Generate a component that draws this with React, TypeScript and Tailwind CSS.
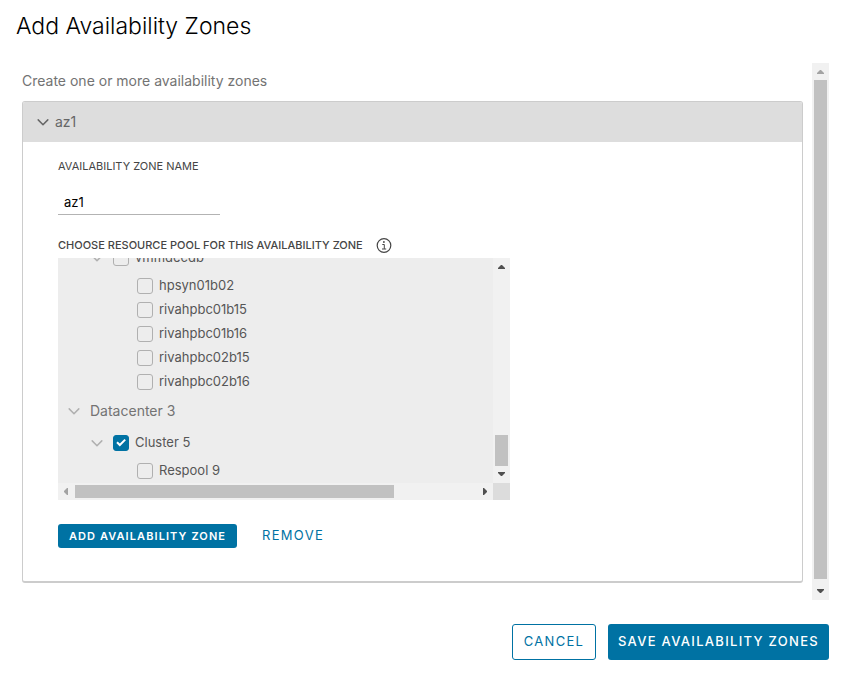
import { useId, useState } from "react";

type ArrowDirection = "up" | "down" | "left" | "right";

const arrowPoints: Record<ArrowDirection, string> = {
  up: "5,11 12,11 12,10 9,7 8,7 5,10",
  down: "5,6 12,6 12,7 9,10 8,10 5,7",
  left: "10,5 10,12 9,12 6,9 6,8 9,5",
  right: "7,5 7,12 8,12 11,9 11,8 8,5",
};

function ScrollArrow({ direction, muted }: { direction: ArrowDirection; muted?: boolean }) {
  return (
    <button
      type="button"
      aria-label={`Scroll ${direction}`}
      className={`size-[17px] shrink-0 ${muted ? "text-[#a3a3a3]" : "text-[#505050]"}`}
    >
      <svg viewBox="0 0 17 17" className="size-[17px]" fill="currentColor">
        <polygon points={arrowPoints[direction]} />
      </svg>
    </button>
  );
}

function Chevron({ className }: { className: string }) {
  return (
    <svg
      viewBox="0 0 12 12"
      className={`size-3 shrink-0 stroke-[1.5] ${className}`}
      fill="none"
      stroke="currentColor"
      strokeLinecap="round"
      strokeLinejoin="round"
    >
      <path d="M1.2 3.9 6 8.7l4.8-4.8" />
    </svg>
  );
}

function TreeCheckbox({ label, defaultChecked }: { label: string; defaultChecked?: boolean }) {
  const id = useId();
  const [checked, setChecked] = useState(Boolean(defaultChecked));
  return (
    <div className="flex items-center gap-1.5">
      <span className="grid size-4 shrink-0">
        <input
          id={id}
          type="checkbox"
          checked={checked}
          onChange={(event) => setChecked(event.target.checked)}
          className="col-start-1 row-start-1 size-4 appearance-none rounded-[3px] border border-[#b0b0b0] checked:border-[#0072a3] checked:bg-[#0072a3]"
        />
        {checked && (
          <svg
            viewBox="0 0 16 16"
            className="pointer-events-none col-start-1 row-start-1 size-4"
            fill="none"
            stroke="white"
            strokeWidth="2"
          >
            <path d="M4 7.3 6.8 10 12.2 4.6" />
          </svg>
        )}
      </span>
      <label htmlFor={id} className="pb-0.5 text-[13px] leading-5 whitespace-nowrap text-[#565656]">
        {label}
      </label>
    </div>
  );
}

function ClusterRow({ label, defaultChecked }: { label: string; defaultChecked?: boolean }) {
  return (
    <div className="flex h-8 shrink-0 items-center gap-2.5 pl-[33px]">
      <button type="button" aria-label={`Collapse ${label}`}>
        <Chevron className="text-[#b0b0b0]" />
      </button>
      <TreeCheckbox label={label} defaultChecked={defaultChecked} />
    </div>
  );
}

function PoolRow({ label }: { label: string }) {
  return (
    <div className="flex h-6 shrink-0 items-center pl-[79px]">
      <TreeCheckbox label={label} />
    </div>
  );
}

const pools = ["hpsyn01b02", "rivahpbc01b15", "rivahpbc01b16", "rivahpbc02b15", "rivahpbc02b16"];

function ResourceTree() {
  return (
    <div className="grid w-full max-w-[452px] grid-cols-[1fr_17px] grid-rows-[225px_17px] bg-[#f1f1f1]">
      <div className="flex flex-col justify-end overflow-hidden bg-[#ededed]">
        <ClusterRow label="vmmdecdb" />
        {pools.map((pool) => (
          <PoolRow key={pool} label={pool} />
        ))}
        <div className="flex h-[33px] shrink-0 items-center gap-2.5 pl-2.5">
          <button type="button" aria-label="Collapse Datacenter 3">
            <Chevron className="text-[#b0b0b0]" />
          </button>
          <span className="text-sm text-[#737373]">Datacenter 3</span>
        </div>
        <ClusterRow label="Cluster 5" defaultChecked />
        <PoolRow label="Respool 9" />
      </div>
      <div className="flex flex-col items-center">
        <ScrollArrow direction="up" />
        <div className="flex w-[13px] grow flex-col justify-end">
          <div className="h-[31px] bg-[#c1c1c1]" />
        </div>
        <ScrollArrow direction="down" />
      </div>
      <div className="flex items-center">
        <ScrollArrow direction="left" muted />
        <div className="grow">
          <div className="h-[13px] w-[79.5%] bg-[#c1c1c1]" />
        </div>
        <ScrollArrow direction="right" />
      </div>
      <div className="bg-[#dcdcdc]" />
    </div>
  );
}

export default function App() {
  const [name, setName] = useState("az1");
  return (
    <div className="bg-white pt-3 pr-[13px] pb-[15px] pl-4 font-['Inter','Open_Sans',sans-serif]">
      <h1 className="text-[23px] leading-7 font-light text-black">Add Availability Zones</h1>

      <div className="mt-[23px] flex items-stretch gap-[9px]">
        <main className="grow pt-2 pb-[17px] pl-1.5">
          <p className="text-sm leading-5 text-[#737373]">Create one or more availability zones</p>

          <section className="mt-2.5 rounded-[3px] border border-b-2 border-[#ccc]">
            <button
              type="button"
              aria-expanded="true"
              className="flex h-10 w-full items-center gap-1.5 rounded-t-[2px] bg-[#ddd] pl-3.5 text-sm text-[#666]"
            >
              <Chevron className="text-[#666]" />
              az1
            </button>

            <div className="px-[35px] pt-4 pb-[33px]">
              <label htmlFor="zone-name" className="block text-[11px] leading-4 text-[#454545]">
                AVAILABILITY ZONE NAME
              </label>
              <input
                id="zone-name"
                type="text"
                value={name}
                onChange={(event) => setName(event.target.value)}
                className="mt-4 block h-[25px] w-[162px] border-b border-[#b3b3b3] px-1.5 text-[13px] text-black outline-none"
              />

              <div className="mt-[22px] flex h-[21px] items-start gap-[13px]">
                <h2 className="text-[11px] leading-4 font-medium text-[#454545]">
                  CHOOSE RESOURCE POOL FOR THIS AVAILABILITY ZONE
                </h2>
                <button type="button" aria-label="About resource pools" className="text-[#454545]">
                  <svg viewBox="0 0 16 16" className="size-4" fill="none" stroke="currentColor">
                    <circle cx="8" cy="8.5" r="6.8" strokeWidth="1.2" />
                    <path d="M6.3 7.5h2v4.4M6 12h4.2" />
                    <circle cx="7.9" cy="5" r="0.9" fill="currentColor" stroke="none" />
                  </svg>
                </button>
              </div>

              <ResourceTree />

              <div className="mt-6 flex items-center gap-[25px]">
                <button
                  type="button"
                  className="h-6 min-w-[179px] rounded-[3px] bg-[#0072a3] px-2.5 text-[11px] font-semibold tracking-widest text-white"
                >
                  ADD AVAILABILITY ZONE
                </button>
                <button type="button" className="h-6 text-[13px] tracking-widest text-[#0072a3]">
                  REMOVE
                </button>
              </div>
            </div>
          </section>
        </main>

        <div className="flex w-[17px] shrink-0 flex-col items-center bg-[#f1f1f1]">
          <ScrollArrow direction="up" muted />
          <div className="flex w-[13px] grow flex-col pb-1">
            <div className="grow bg-[#c1c1c1]" />
          </div>
          <ScrollArrow direction="down" />
        </div>
      </div>

      <footer className="mt-6 flex justify-end gap-3">
        <button
          type="button"
          className="h-9 min-w-[84px] rounded-[3px] border border-[#0072a3] px-2.5 text-[13px] tracking-widest text-[#0072a3]"
        >
          CANCEL
        </button>
        <button
          type="button"
          className="h-9 min-w-[221px] rounded-[3px] bg-[#0072a3] px-2 text-[13px] font-medium tracking-widest text-white"
        >
          SAVE AVAILABILITY ZONES
        </button>
      </footer>
    </div>
  );
}
